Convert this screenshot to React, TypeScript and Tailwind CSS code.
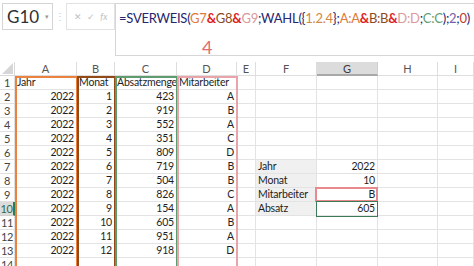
import React from 'react';

const cols = [15, 62, 38, 62, 60, 19, 61, 61, 60, 36];
const letters = ['A', 'B', 'C', 'D', 'E', 'F', 'G', 'H', 'I'];

type Row = { a?: string; b?: string; c?: string; d?: string; f?: string; g?: string };

const rows: Row[] = [
  { a: 'Jahr', b: 'Monat', c: 'Absatzmenge', d: 'Mitarbeiter' },
  { a: '2022', b: '1', c: '423', d: 'A' },
  { a: '2022', b: '2', c: '919', d: 'B' },
  { a: '2022', b: '3', c: '552', d: 'A' },
  { a: '2022', b: '4', c: '351', d: 'C' },
  { a: '2022', b: '5', c: '809', d: 'D' },
  { a: '2022', b: '6', c: '719', d: 'B', f: 'Jahr', g: '2022' },
  { a: '2022', b: '7', c: '504', d: 'B', f: 'Monat', g: '10' },
  { a: '2022', b: '8', c: '826', d: 'C', f: 'Mitarbeiter', g: 'B' },
  { a: '2022', b: '9', c: '154', d: 'A', f: 'Absatz', g: '605' },
  { a: '2022', b: '10', c: '605', d: 'B' },
  { a: '2022', b: '11', c: '951', d: 'A' },
  { a: '2022', b: '12', c: '918', d: 'D' },
  {},
];

const Formula = () => (
  <span className="whitespace-nowrap">
    <span className="text-[#26266e]">=SVERWEIS(</span>
    <span className="text-[#e07a36]">G7</span>
    <span className="text-[#e0201c] font-bold">&amp;</span>
    <span className="text-[#8e4a1c]">G8</span>
    <span className="text-[#e0201c] font-bold">&amp;</span>
    <span className="text-[#d99a9a]">G9</span>
    <span className="text-[#26266e]">;WAHL({'{'}</span>
    <span className="text-[#d08a44]">1.2.4</span>
    <span className="text-[#26266e]">{'}'};</span>
    <span className="text-[#e07a36]">A:A</span>
    <span className="text-[#e0201c] font-bold">&amp;</span>
    <span className="text-[#8e4a1c]">B:B</span>
    <span className="text-[#e0201c] font-bold">&amp;</span>
    <span className="text-[#d99a9a]">D:D</span>
    <span className="text-[#26266e]">;</span>
    <span className="text-[#5f9c72]">C:C</span>
    <span className="text-[#26266e]">);</span>
    <span className="text-[#7a5ca8]">2</span>
    <span className="text-[#26266e]">;</span>
    <span className="text-[#c0392b]">0</span>
    <span className="text-[#26266e]">)</span>
  </span>
);

const Cell = ({ w, children, right, className = '' }: { w: number; children?: React.ReactNode; right?: boolean; className?: string }) => (
  <div
    className={`h-[14px] shrink-0 border-r border-b border-[#e3e3e3] text-[10.5px] leading-[13px] tracking-[-0.2px] text-[#1e1e1e] px-[2px] overflow-hidden whitespace-nowrap ${right ? 'text-right' : 'text-left'} ${className}`}
    style={{ width: w }}
  >
    {children}
  </div>
);

export default function App() {
  return (
    <div className="w-[474px] h-[266px] overflow-hidden bg-white relative" style={{ fontFamily: 'Lato, "Open Sans", sans-serif' }}>
      {/* formula bar */}
      <div className="h-[62px] flex items-start pt-[3px]">
        <div className="shrink-0 ml-[2px] w-[51px] h-[27px] border border-[#d4d4d4] flex items-center justify-between pl-[4px] pr-[3px]">
          <span className="text-[17px] text-[#303030] leading-none">G10</span>
          <span className="text-[7px] text-[#9a9a9a]">▾</span>
        </div>
        <div className="shrink-0 w-[13px] h-[27px] flex items-center justify-center text-[10px] text-[#c8c8c8]">⋮</div>
        <div className="shrink-0 w-[49px] h-[27px] border border-[#e2e2e2] flex items-center justify-around px-[4px] text-[#c0c0c0] text-[9px]">
          <span>✕</span>
          <span>✓</span>
          <span className="italic text-[9px]">fx</span>
        </div>
        <div className="relative min-w-0 flex-1 h-[53px] border border-r-0 border-[#d6d6d6] pl-[3px] pt-[5px] text-[13px] leading-[18px] tracking-[-0.25px]">
          <Formula />
          <span className="absolute left-[86px] top-[34px] text-[18px] leading-[18px] text-[#e06c6c]">4</span>
        </div>
      </div>

      {/* grid */}
      <div className="relative">
        <div className="flex h-[14px]">
          <div className="shrink-0 h-[14px] border-r border-b border-[#d8d8d8] relative" style={{ width: cols[0] }}>
            <svg width="11" height="11" className="absolute right-[1px] bottom-[1px]" viewBox="0 0 11 11">
              <path d="M11 0 L11 11 L0 11 Z" fill="#d6d6d6" />
            </svg>
          </div>
          {letters.map((l, i) => (
            <div
              key={l}
              className={`shrink-0 h-[14px] border-r text-center text-[11px] leading-[13px] ${l === 'G' ? 'bg-[#dcdcdc] border-b-2 border-b-[#a8a8a8] text-[#3a3a3a] border-r-[#d0d0d0]' : 'border-b border-[#dedede] text-[#555]'}`}
              style={{ width: cols[i + 1] }}
            >
              {l}
            </div>
          ))}
        </div>
        {rows.map((r, i) => {
          const n = i + 1;
          const hdr = n === 10;
          const labelBg = n >= 7 && n <= 10 ? 'bg-[#f0f0f0]' : '';
          return (
            <div key={n} className="flex">
              <div
                className={`shrink-0 h-[14px] border-b text-center text-[11px] leading-[13px] tracking-[-0.3px] ${hdr ? 'bg-[#dcdcdc] text-[#2e6b48] border-r-2 border-r-[#2e7d4f] border-b-[#d0d0d0]' : 'border-r border-[#e0e0e0] text-[#444]'}`}
                style={{ width: cols[0] }}
              >
                {n}
              </div>
              <Cell w={cols[1]} right={n > 1}>{r.a}</Cell>
              <Cell w={cols[2]} right={n > 1}>{r.b}</Cell>
              <Cell w={cols[3]} right={n > 1}>{r.c}</Cell>
              <Cell w={cols[4]} right={n > 1}>{r.d}</Cell>
              <Cell w={cols[5]} />
              <Cell w={cols[6]} className={labelBg}>{r.f}</Cell>
              <Cell w={cols[7]} right>{r.g}</Cell>
              <Cell w={cols[8]} />
              <Cell w={cols[9]} />
            </div>
          );
        })}

        {/* range highlights */}
        <div className="absolute left-[15px] top-[14px] w-[63px] h-[300px] border-2 border-b-0 border-[#ec8240]" />
        <div className="absolute left-[77px] top-[14px] w-[39px] h-[300px] border-2 border-b-0 border-[#934916]" />
        <div className="absolute left-[115px] top-[14px] w-[63px] h-[300px] border-2 border-b-0 border-[#5e9c70]" />
        <div className="absolute left-[177px] top-[14px] w-[61px] h-[300px] border-2 border-b-0 border-[#e9a3aa]" />
        <div className="absolute left-[315px] top-[125px] w-[63px] h-[15px] border-2 border-[#e88a8d]" />
        <div className="absolute left-[316px] top-[139px] w-[62px] h-[16px] border-[1.5px] border-[#3d7a58]" />
      </div>
    </div>
  );
}
